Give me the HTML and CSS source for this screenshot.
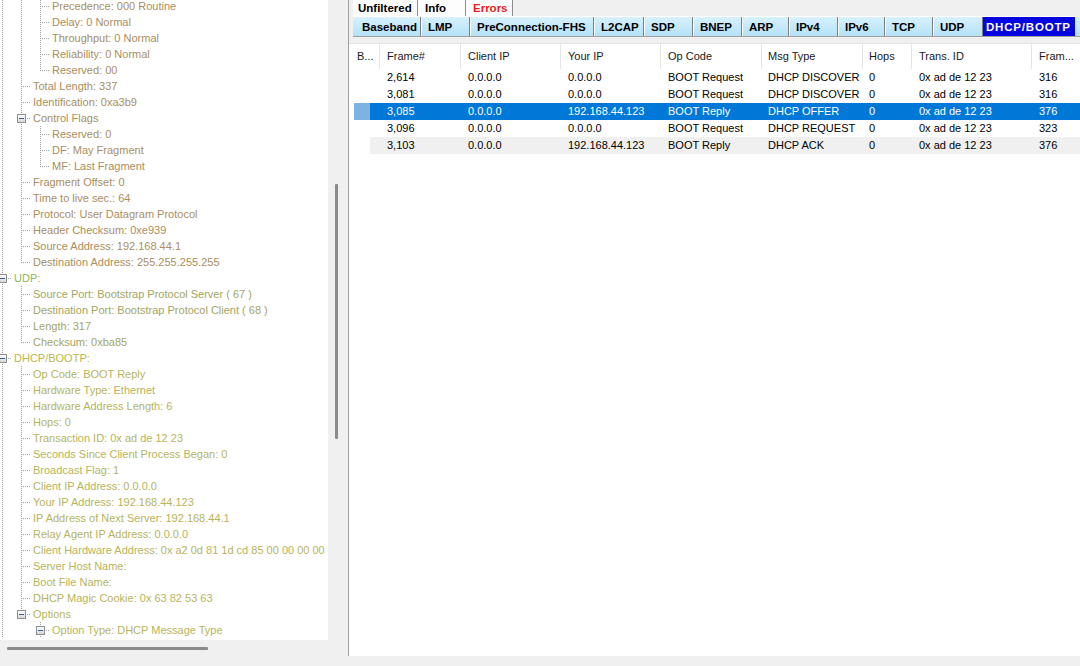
FILE: index.html
```html
<!DOCTYPE html>
<html>
<head>
<meta charset="utf-8">
<link rel="stylesheet" href="styles.css">
</head>
<body>
<div class="app">
  <div class="left">
    <div class="lefttop">
      <div class="tree">
        <div class="rows">
          <div class="row"><i class="g v"></i><i class="g v"></i><i class="g t"></i><span class="tx ip">Precedence: 000 Routine</span></div>
          <div class="row"><i class="g v"></i><i class="g v"></i><i class="g t"></i><span class="tx ip">Delay: 0 Normal</span></div>
          <div class="row"><i class="g v"></i><i class="g v"></i><i class="g t"></i><span class="tx ip">Throughput: 0 Normal</span></div>
          <div class="row"><i class="g v"></i><i class="g v"></i><i class="g t"></i><span class="tx ip">Reliability: 0 Normal</span></div>
          <div class="row"><i class="g v"></i><i class="g v"></i><i class="g l"></i><span class="tx ip">Reserved: 00</span></div>
          <div class="row"><i class="g v"></i><i class="g t"></i><span class="tx ip">Total Length: 337</span></div>
          <div class="row"><i class="g v"></i><i class="g t"></i><span class="tx ip">Identification: 0xa3b9</span></div>
          <div class="row"><i class="g v"></i><i class="g t"><b class="box"></b></i><span class="tx ip">Control Flags</span></div>
          <div class="row"><i class="g v"></i><i class="g v"></i><i class="g t"></i><span class="tx ip">Reserved: 0</span></div>
          <div class="row"><i class="g v"></i><i class="g v"></i><i class="g t"></i><span class="tx ip">DF: May Fragment</span></div>
          <div class="row"><i class="g v"></i><i class="g v"></i><i class="g l"></i><span class="tx ip">MF: Last Fragment</span></div>
          <div class="row"><i class="g v"></i><i class="g t"></i><span class="tx ip">Fragment Offset: 0</span></div>
          <div class="row"><i class="g v"></i><i class="g t"></i><span class="tx ip">Time to live sec.: 64</span></div>
          <div class="row"><i class="g v"></i><i class="g t"></i><span class="tx ip">Protocol: User Datagram Protocol</span></div>
          <div class="row"><i class="g v"></i><i class="g t"></i><span class="tx ip">Header Checksum: 0xe939</span></div>
          <div class="row"><i class="g v"></i><i class="g t"></i><span class="tx ip">Source Address: 192.168.44.1</span></div>
          <div class="row"><i class="g v"></i><i class="g l"></i><span class="tx ip">Destination Address: 255.255.255.255</span></div>
          <div class="row"><i class="g t"><b class="box"></b></i><span class="tx udph">UDP:</span></div>
          <div class="row"><i class="g v"></i><i class="g t"></i><span class="tx udp">Source Port: Bootstrap Protocol Server ( 67 )</span></div>
          <div class="row"><i class="g v"></i><i class="g t"></i><span class="tx udp">Destination Port: Bootstrap Protocol Client ( 68 )</span></div>
          <div class="row"><i class="g v"></i><i class="g t"></i><span class="tx udp">Length: 317</span></div>
          <div class="row"><i class="g v"></i><i class="g l"></i><span class="tx udp">Checksum: 0xba85</span></div>
          <div class="row"><i class="g t"><b class="box"></b></i><span class="tx dhh">DHCP/BOOTP:</span></div>
          <div class="row"><i class="g v"></i><i class="g t"></i><span class="tx dh">Op Code: BOOT Reply</span></div>
          <div class="row"><i class="g v"></i><i class="g t"></i><span class="tx dh">Hardware Type: Ethernet</span></div>
          <div class="row"><i class="g v"></i><i class="g t"></i><span class="tx dh">Hardware Address Length: 6</span></div>
          <div class="row"><i class="g v"></i><i class="g t"></i><span class="tx dh">Hops: 0</span></div>
          <div class="row"><i class="g v"></i><i class="g t"></i><span class="tx dh">Transaction ID: 0x ad de 12 23</span></div>
          <div class="row"><i class="g v"></i><i class="g t"></i><span class="tx dh">Seconds Since Client Process Began: 0</span></div>
          <div class="row"><i class="g v"></i><i class="g t"></i><span class="tx dh">Broadcast Flag: 1</span></div>
          <div class="row"><i class="g v"></i><i class="g t"></i><span class="tx dh">Client IP Address: 0.0.0.0</span></div>
          <div class="row"><i class="g v"></i><i class="g t"></i><span class="tx dh">Your IP Address: 192.168.44.123</span></div>
          <div class="row"><i class="g v"></i><i class="g t"></i><span class="tx dh">IP Address of Next Server: 192.168.44.1</span></div>
          <div class="row"><i class="g v"></i><i class="g t"></i><span class="tx dh">Relay Agent IP Address: 0.0.0.0</span></div>
          <div class="row"><i class="g v"></i><i class="g t"></i><span class="tx dh">Client Hardware Address: 0x a2 0d 81 1d cd 85 00 00 00 00 00 00 00 00 00 00</span></div>
          <div class="row"><i class="g v"></i><i class="g t"></i><span class="tx dh">Server Host Name:</span></div>
          <div class="row"><i class="g v"></i><i class="g t"></i><span class="tx dh">Boot File Name:</span></div>
          <div class="row"><i class="g v"></i><i class="g t"></i><span class="tx dh">DHCP Magic Cookie: 0x 63 82 53 63</span></div>
          <div class="row"><i class="g v"></i><i class="g l"><b class="box"></b></i><span class="tx dh">Options</span></div>
          <div class="row"><i class="g v"></i><i class="g e"></i><i class="g t"><b class="box"></b></i><span class="tx dh">Option Type: DHCP Message Type</span></div>
        </div>
      </div>
      <div class="vscroll"><div class="vthumb"></div></div>
    </div>
    <div class="hscroll"><div class="hthumb"></div></div>
  </div>

  <div class="right">
    <div class="tabs1">
      <div class="t1 w-unf">Unfiltered</div>
      <div class="t1 w-info">Info</div>
      <div class="t1 w-err err">Errors</div>
    </div>
    <div class="tabs2">
      <div class="t2 first">Baseband</div>
      <div class="t2 w49">LMP</div>
      <div class="t2 w124">PreConnection-FHS</div>
      <div class="t2 w50">L2CAP</div>
      <div class="t2 w49">SDP</div>
      <div class="t2 w49">BNEP</div>
      <div class="t2 w47">ARP</div>
      <div class="t2 w49">IPv4</div>
      <div class="t2 w47">IPv6</div>
      <div class="t2 w48">TCP</div>
      <div class="t2 w50">UDP</div>
      <div class="t2 sel">DHCP/BOOTP</div>
    </div>
    <div class="grid">
      <div class="tr hd">
        <div class="c c0">B...</div><div class="c">Frame#</div><div class="c">Client IP</div><div class="c">Your IP</div><div class="c">Op Code</div><div class="c p6">Msg Type</div><div class="c p6">Hops</div><div class="c">Trans. ID</div><div class="c">Fram...</div>
      </div>
      <div class="tr">
        <div class="c c0"></div><div class="c">2,614</div><div class="c">0.0.0.0</div><div class="c">0.0.0.0</div><div class="c">BOOT Request</div><div class="c p6">DHCP DISCOVER</div><div class="c p6">0</div><div class="c">0x ad de 12 23</div><div class="c">316</div>
      </div>
      <div class="tr">
        <div class="c c0"></div><div class="c">3,081</div><div class="c">0.0.0.0</div><div class="c">0.0.0.0</div><div class="c">BOOT Request</div><div class="c p6">DHCP DISCOVER</div><div class="c p6">0</div><div class="c">0x ad de 12 23</div><div class="c">316</div>
      </div>
      <div class="tr selrow">
        <div class="c c0"></div><div class="c">3,085</div><div class="c">0.0.0.0</div><div class="c">192.168.44.123</div><div class="c">BOOT Reply</div><div class="c p6">DHCP OFFER</div><div class="c p6">0</div><div class="c">0x ad de 12 23</div><div class="c">376</div>
      </div>
      <div class="tr">
        <div class="c c0"></div><div class="c">3,096</div><div class="c">0.0.0.0</div><div class="c">0.0.0.0</div><div class="c">BOOT Request</div><div class="c p6">DHCP REQUEST</div><div class="c p6">0</div><div class="c">0x ad de 12 23</div><div class="c">323</div>
      </div>
      <div class="tr hov">
        <div class="c c0"></div><div class="c">3,103</div><div class="c">0.0.0.0</div><div class="c">192.168.44.123</div><div class="c">BOOT Reply</div><div class="c p6">DHCP ACK</div><div class="c p6">0</div><div class="c">0x ad de 12 23</div><div class="c">376</div>
      </div>
    </div>
  </div>
</div>
</body>
</html>
```

FILE: styles.css
```css
html, body {
  margin: 0;
  padding: 0;
}
body {
  width: 1080px;
  height: 666px;
  overflow: hidden;
  background: #f0f0f0;
  font-family: "Liberation Sans", Arial, sans-serif;
  font-size: 11px;
  color: #000;
}
.app {
  display: flex;
  height: 666px;
}

/* ---------- left tree panel ---------- */
.left {
  width: 345px;
  flex: none;
  display: flex;
  flex-direction: column;
}
.lefttop {
  display: flex;
  height: 640px;
}
.tree {
  width: 328px;
  background: #fff;
  overflow: hidden;
}
.rows {
  margin: -2px 0 0 -8px;
}
.row {
  display: flex;
  height: 16px;
  line-height: 16px;
  white-space: nowrap;
}
.g {
  position: relative;
  flex: none;
  width: 19px;
  height: 16px;
}
.g.v::before,
.g.t::before,
.g.l::before {
  content: "";
  position: absolute;
  left: 10px;
  top: 0;
  width: 1px;
  height: 16px;
  background: repeating-linear-gradient(to bottom, #a0a0a0 0 1px, transparent 1px 2px);
}
.g.l::before {
  height: 9px;
}
.g.t::after,
.g.l::after {
  content: "";
  position: absolute;
  left: 12px;
  top: 8px;
  width: 8px;
  height: 1px;
  background: repeating-linear-gradient(to right, #a0a0a0 0 1px, transparent 1px 2px);
}
.box {
  position: absolute;
  left: 6px;
  top: 4px;
  width: 7px;
  height: 7px;
  border: 1px solid #8e8f8f;
  background: linear-gradient(#ffffff, #d6d6d6);
  z-index: 1;
}
.box::after {
  content: "";
  position: absolute;
  left: 1px;
  top: 3px;
  width: 5px;
  height: 1px;
  background: #3f5e93;
}
.tx {
  margin-left: 3px;
}
.ip { color: #a98e60; }
.udph { color: #94b65a; }
.udp { color: #a3a563; }
.dhh { color: #bbb748; }
.dh { color: #b6b45c; }

.vscroll {
  width: 17px;
  background: #f0f0f0;
  padding-top: 184px;
  box-sizing: border-box;
}
.vthumb {
  margin-left: 7px;
  width: 3px;
  height: 255px;
  background: #8b8b8b;
  border-radius: 1px;
}
.hscroll {
  flex: 1;
  padding-top: 7px;
  box-sizing: border-box;
}
.hthumb {
  margin-left: 7px;
  width: 201px;
  height: 3px;
  background: #8b8b8b;
  border-radius: 1px;
}

/* ---------- right panel ---------- */
.right {
  margin-left: 3px;
  flex: 1;
  height: 656px;
  border-left: 1px solid #a0a0a0;
  display: flex;
  flex-direction: column;
  min-width: 0;
}
.tabs1 {
  display: flex;
  height: 16px;
  margin-left: 4px;
}
.t1 {
  height: 16px;
  line-height: 16px;
  box-sizing: border-box;
  background: #fdfdfd;
  font-weight: bold;
  font-size: 11.5px;
  padding-left: 6px;
  border-right: 1px solid #8c8c8c;
  white-space: nowrap;
}
.w-unf { width: 65px; padding-left: 5px; }
.w-info { width: 48px; padding-left: 7px; }
.w-err { width: 47px; padding-left: 7px; }
.err { color: #e61e1e; }

.tabs2 {
  display: flex;
  height: 19px;
  margin-left: 4px;
  border-top: 1px solid #ffffff;
  border-bottom: 1px solid #a0a0a0;
  background: linear-gradient(#d8f1fd, #b3e1f8);
}
.t2 {
  height: 19px;
  line-height: 20px;
  box-sizing: border-box;
  font-weight: bold;
  font-size: 11.5px;
  padding-left: 7px;
  border-right: 1px solid #7d7d7d;
  box-shadow: 1px 0 0 #ffffff;
  white-space: nowrap;
  flex: none;
}
.t2.first { width: 68px; padding-left: 9px; }
.w47 { width: 47px; }
.w48 { width: 48px; }
.w49 { width: 49px; }
.w50 { width: 50px; }
.w124 { width: 124px; }
.t2.sel {
  width: 92px;
  padding-left: 3px;
  letter-spacing: 0.8px;
  background: #0505e0;
  color: #ffffff;
  border-right: none;
  box-shadow: none;
}

/* ---------- table ---------- */
.grid {
  flex: 1;
  margin-top: 6px;
  border-top: 1px solid #e3e3e3;
  background: #ffffff;
  overflow: hidden;
}
.tr {
  display: grid;
  grid-template-columns: 31px 81px 100px 100px 101px 101px 49px 120px 100px;
  height: 17px;
  line-height: 17px;
  white-space: nowrap;
}
.tr.hd {
  height: 25px;
  line-height: 25px;
}
.c {
  padding-left: 7px;
  overflow: hidden;
}
.c.c0 { padding-left: 8px; }
.c.p6 { padding-left: 6px; }
.tr.hd .c {
  border-right: 1px solid #e5e5e5;
  color: #1a1a1a;
}
.tr.selrow {
  background: linear-gradient(to right, #ffffff 0 5px, #7cb2e4 5px 21px, #0078d7 21px);
  color: #ffffff;
}
.tr.hov {
  background: linear-gradient(to right, #ffffff 0 21px, #f0f0f0 21px);
}
```
